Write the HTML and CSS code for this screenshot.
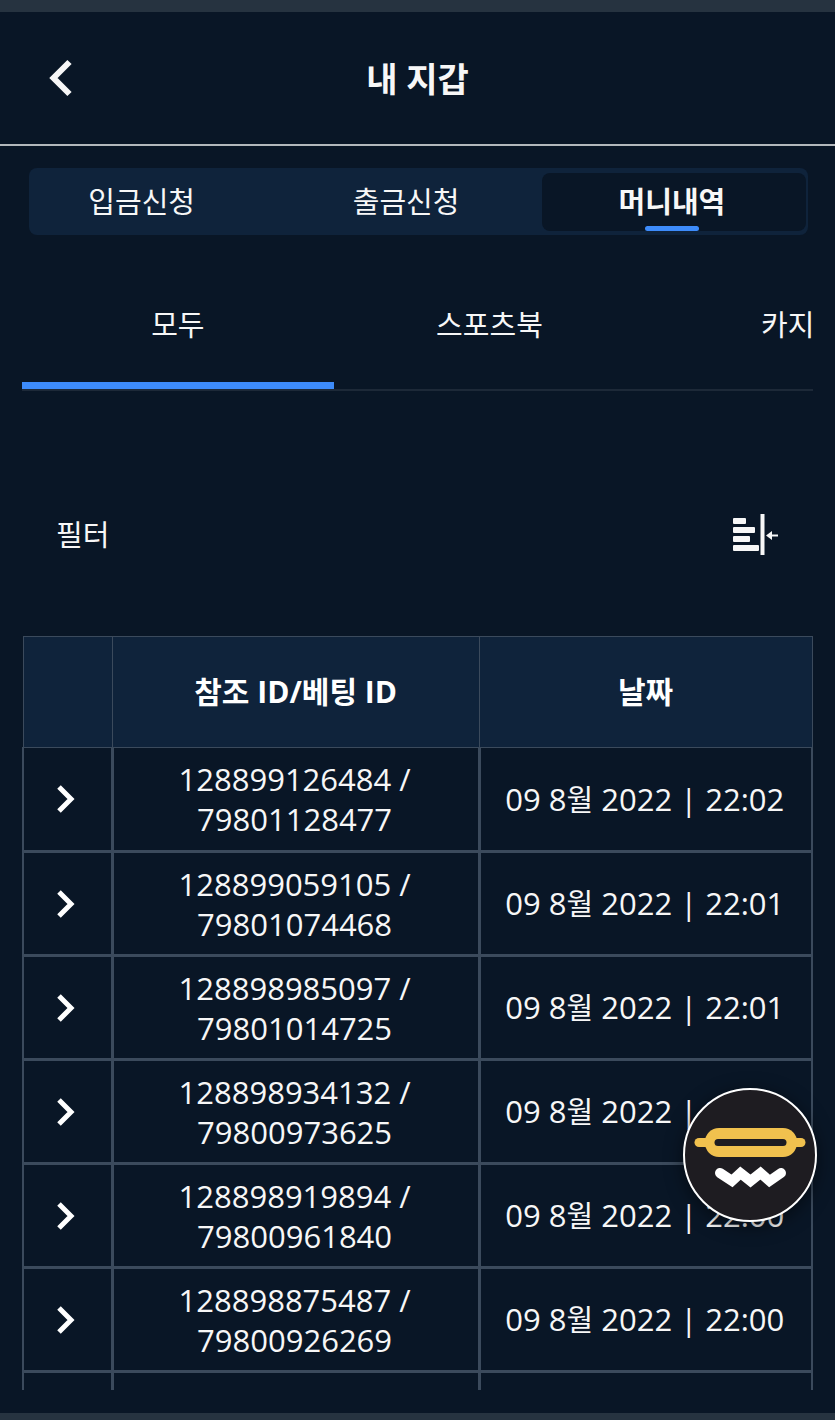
FILE: index.html
```html
<!DOCTYPE html>
<html lang="ko">
<head>
  <meta charset="UTF-8" />
  <meta name="viewport" content="width=device-width, initial-scale=1.0"/>
  <title>내 지갑</title>
  <link rel="stylesheet" href="styles.css">
</head>
<body>
  <header class="header">
    <button class="back" aria-label="뒤로">
      <svg width="24" height="38" viewBox="0 0 24 38"><path d="M20.500 3L4.500 19L20.500 35" fill="none" stroke="currentColor" stroke-width="6"/></svg>
    </button>
    <h1>내 지갑</h1>
  </header>

  <nav class="wallet-nav">
    <a href="#">입금신청</a>
    <a href="#">출금신청</a>
    <a href="#" class="active">머니내역</a>
  </nav>

  <div class="tabs">
    <button class="tab active">모두</button>
    <button class="tab">스포츠북</button>
    <button class="tab">카지노</button>
  </div>

  <div class="filter">
    <span>필터</span>
    <button class="filter-btn" aria-label="필터 열기">
      <svg width="46" height="42" viewBox="0 0 46 42" fill="currentColor">
        <rect x="0" y="4" width="13" height="6" rx="1"/>
        <rect x="0" y="13" width="22" height="6" rx="1"/>
        <rect x="0" y="22" width="17" height="6" rx="1"/>
        <rect x="0" y="31" width="26" height="6" rx="1"/>
        <rect x="27.500" y="0" width="4" height="41"/>
        <path d="M33 21.500L39 17V20.500H45V22.500H39V26Z"/>
      </svg>
    </button>
  </div>

  <main class="history">
    <table>
      <colgroup>
        <col class="col-open">
        <col class="col-id">
        <col class="col-date">
      </colgroup>
      <thead>
        <tr><th></th><th>참조 ID/베팅 ID</th><th>날짜</th></tr>
      </thead>
      <tbody>
        <tr>
          <td><button class="open" aria-label="자세히"><svg width="20" height="28" viewBox="0 0 20 28"><path d="M3 2L15 14L3 26"/></svg></button></td>
          <td>128899126484 /<br>79801128477</td>
          <td>09 8<span class="ko">월</span> 2022 | 22:02</td>
        </tr>
        <tr>
          <td><button class="open" aria-label="자세히"><svg width="20" height="28" viewBox="0 0 20 28"><path d="M3 2L15 14L3 26"/></svg></button></td>
          <td>128899059105 /<br>79801074468</td>
          <td>09 8<span class="ko">월</span> 2022 | 22:01</td>
        </tr>
        <tr>
          <td><button class="open" aria-label="자세히"><svg width="20" height="28" viewBox="0 0 20 28"><path d="M3 2L15 14L3 26"/></svg></button></td>
          <td>128898985097 /<br>79801014725</td>
          <td>09 8<span class="ko">월</span> 2022 | 22:01</td>
        </tr>
        <tr>
          <td><button class="open" aria-label="자세히"><svg width="20" height="28" viewBox="0 0 20 28"><path d="M3 2L15 14L3 26"/></svg></button></td>
          <td>128898934132 /<br>79800973625</td>
          <td>09 8<span class="ko">월</span> 2022 | 22:00</td>
        </tr>
        <tr>
          <td><button class="open" aria-label="자세히"><svg width="20" height="28" viewBox="0 0 20 28"><path d="M3 2L15 14L3 26"/></svg></button></td>
          <td>128898919894 /<br>79800961840</td>
          <td>09 8<span class="ko">월</span> 2022 | 22:00</td>
        </tr>
        <tr>
          <td><button class="open" aria-label="자세히"><svg width="20" height="28" viewBox="0 0 20 28"><path d="M3 2L15 14L3 26"/></svg></button></td>
          <td>128898875487 /<br>79800926269</td>
          <td>09 8<span class="ko">월</span> 2022 | 22:00</td>
        </tr>
        <tr><td></td><td></td><td></td></tr>
      </tbody>
    </table>
  </main>

  <button class="fab" aria-label="바로가기">
    <svg viewBox="0 0 130 130">
      <path d="M14 52.500H116" stroke="#f1c14e" stroke-width="9" stroke-linecap="round"/>
      <rect x="20" y="38" width="92" height="29" rx="14" fill="#f1c14e"/>
      <rect x="29.500" y="49" width="72" height="7" rx="3.500" fill="#1e1c21"/>
      <path d="M35 83L47 91L55.500 83L65.500 91L75.500 83L84.500 91L96 83" fill="none" stroke="#fff" stroke-width="10" stroke-linecap="round"/>
    </svg>
  </button>
</body>
</html>
```
FILE: styles.css
```css
* {
  box-sizing: border-box;
}

body {
  display: flex;
  flex-direction: column;
  height: 100vh;
  margin: 0;
  border-top: 12px solid #263340;
  border-bottom: 7px solid #263340;
  background: #091626;
  color: #f7f7f7;
  font-family: "Open Sans", "Noto Sans CJK KR", sans-serif;
  font-size: 29px;
  line-height: 40px;
  overflow: hidden;
}

button {
  padding: 0;
  border: 0;
  background: none;
  color: inherit;
  font: inherit;
  cursor: pointer;
}

svg {
  display: block;
}

.header {
  display: grid;
  grid-template-columns: 50px 1fr 50px;
  align-items: center;
  flex: none;
  height: 134px;
  padding: 0 49px;
  border-bottom: 2px solid #b3b8bc;
}

.header h1 {
  margin: 0;
  padding-top: 2px;
  font-size: 34px;
  text-align: center;
}

.wallet-nav {
  display: grid;
  grid-template-columns: 29fr 37fr 34fr;
  flex: none;
  height: 67px;
  margin: 22px 27px 0 29px;
  padding: 5px 2px 4px 0;
  border-radius: 8px;
  background: #0f233b;
}

.wallet-nav a {
  display: flex;
  flex-direction: column;
  align-items: center;
  justify-content: space-between;
  padding-top: 9px;
  color: inherit;
  text-decoration: none;
}

.wallet-nav a:nth-child(2) {
  padding-left: 16px;
}

.wallet-nav .active {
  padding-right: 4px;
  border-radius: 8px;
  background: #091626;
  font-weight: bold;
}

.wallet-nav .active::after {
  content: "";
  width: 54px;
  height: 5px;
  border-radius: 3px;
  background: #3d8bfa;
}

.tabs {
  display: flex;
  flex: none;
  height: 132px;
  margin: 24px 22px 0;
  border-bottom: 2px solid #1d2938;
  overflow: hidden;
}

.tab {
  flex: 0 0 39.4%;
  padding-top: 8px;
  border-bottom: 7px solid transparent;
}

.tab.active {
  border-bottom-color: #3d8bfa;
}

.filter {
  display: flex;
  align-items: center;
  justify-content: space-between;
  flex: none;
  height: 42px;
  margin: 123px 56px 80px;
}

.history {
  flex: 1;
  min-height: 0;
  margin: 0 22px 23px;
  overflow: hidden;
}

table {
  width: 100%;
  border-collapse: collapse;
  table-layout: fixed;
}

.col-open {
  width: 11.3%;
}

.col-id {
  width: 46.5%;
}

th,
td {
  padding: 0;
  border: 3px solid #3b4a5c;
  text-align: center;
}

th {
  height: 111px;
  border-width: 1px;
  background: #0f233b;
  color: #fff;
  font-size: 30px;
}

td {
  height: 104px;
  padding-right: 2px;
  font-size: 31px;
}

tbody tr:first-child td {
  border-top-width: 1px;
}

td:first-child {
  border-left-width: 2px;
}

td:last-child {
  border-right-width: 2px;
}

.ko {
  font-size: 29px;
}

.open {
  display: block;
  margin: 0 auto;
}

.open path {
  fill: none;
  stroke: #fff;
  stroke-width: 5;
}

.fab {
  position: fixed;
  right: 18px;
  bottom: 198px;
  width: 134px;
  height: 134px;
  border: 2px solid #fff;
  border-radius: 50%;
  background: #1e1c21;
  box-shadow: 0 4px 18px rgba(0, 0, 0, 0.5);
}
```
